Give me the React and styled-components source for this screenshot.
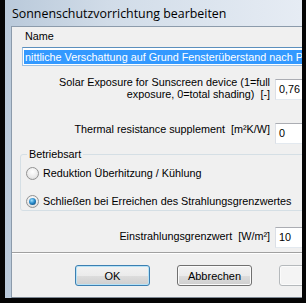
import React from 'react';
import styled, { createGlobalStyle } from 'styled-components';

// Grundlayout: schwarzer Rand, Fenster mit Aero-Rahmen
const GlobalStyle = createGlobalStyle`
  html, body {
    margin: 0;
    padding: 0;
    background: #000;
  }
  body {
    font-family: "Liberation Sans", Arial, sans-serif;
  }
`;

const Screen = styled.div`
  width: 306px;
  height: 303px;
  background: #050505;
  display: flex;
  overflow: hidden;
`;

const Window = styled.div`
  margin-left: 5px;
  width: 297px;
  height: 298px;
  display: flex;
  flex-direction: column;
  background: linear-gradient(90deg, #b9c9da 0%, #d1dce8 35%, #e6ecf4 100%);
`;

const TitleBar = styled.div`
  height: 26px;
  display: flex;
  align-items: center;
  padding-left: 7px;
  font-family: "Open Sans", "Noto Sans", sans-serif;
  font-size: 12.4px;
  color: #000;
  white-space: nowrap;
`;

const Frame = styled.div`
  flex: 1;
  display: flex;
  padding-left: 6px;
  min-height: 0;
`;

const Client = styled.div`
  flex: 1;
  min-width: 0;
  display: flex;
  flex-direction: column;
  background: #f0f0f0;
  border-top: 1px solid #8c9bab;
  border-left: 1px solid #8c9bab;
  border-bottom: 1px solid #7d8894;
  overflow: hidden;
  font-size: 10.8px;
  color: #000;
`;

// Formularbereich
const Body = styled.div`
  padding: 3px 0 0 10px;
  width: 330px;
  display: flex;
  flex-direction: column;
`;

const FieldLabel = styled.div`
  margin-left: 3px;
  line-height: 13px;
`;

const NameBox = styled.div`
  margin-top: 4px;
  height: 19px;
  box-sizing: border-box;
  border: 1px solid #9dc1e3;
  border-top-color: #5b8fbd;
  background: #fff;
  display: flex;
  align-items: center;
  padding-left: 1px;
  overflow: hidden;
  white-space: nowrap;
`;

const Selection = styled.span`
  background: #3399ff;
  color: #fff;
  line-height: 14px;
  padding-left: 1px;
`;

const FormRow = styled.div`
  margin-top: ${p => p.$gap}px;
  display: grid;
  grid-template-columns: 248px 60px;
  column-gap: 5px;
  align-items: start;
`;

const RowLabel = styled.div`
  text-align: right;
  line-height: ${p => (p.$lines ? 12 : 13)}px;
  margin-top: ${p => p.$offset || 0}px;
  white-space: nowrap;
`;

const NumberBox = styled.div`
  margin-top: ${p => p.$offset || 0}px;
  height: 21px;
  box-sizing: border-box;
  border: 1px solid #dbdfe6;
  border-top-color: #abadb3;
  border-bottom-color: #e3e9ef;
  background: #fff;
  padding: 3px 0 0 3px;
  line-height: 13px;
`;

// Gruppenrahmen "Betriebsart"
const GroupBox = styled.div`
  margin: 10px 0 0 -2px;
  border: 1px solid #d5dfe5;
  border-radius: 3px;
  padding: 0 0 2px 5px;
  display: flex;
  flex-direction: column;
`;

const GroupTitle = styled.div`
  margin-top: -7px;
  margin-left: 1px;
  padding: 0 2px;
  width: fit-content;
  background: #f0f0f0;
  line-height: 13px;
`;

const RadioRow = styled.div`
  margin-top: ${p => p.$gap}px;
  height: 13px;
  display: flex;
  align-items: center;
  gap: 4px;
  line-height: 13px;
  white-space: nowrap;
`;

const RadioDot = styled.span`
  flex: none;
  width: 13px;
  height: 13px;
  box-sizing: border-box;
  border-radius: 50%;
  border: 1px solid #929292;
  background: radial-gradient(circle at 50% 35%, #ffffff 0%, #ececec 55%, #d2d2d2 100%);
  display: flex;
  align-items: center;
  justify-content: center;

  &::after {
    content: '';
    display: ${p => (p.$checked ? 'block' : 'none')};
    width: 7px;
    height: 7px;
    border-radius: 50%;
    background: radial-gradient(circle at 40% 35%, #a6e4ff 0%, #2a8ccc 45%, #0c355c 100%);
  }
`;

// Schaltflächen unten
const ButtonPanel = styled.div`
  margin-top: 4px;
  flex: 1;
  border-top: 1px solid #a0a0a0;
  box-shadow: inset 0 1px 0 #ffffff;
  padding: 12px 0 0 63px;
  display: flex;
  gap: 27px;
  align-items: flex-start;
`;

const Button = styled.button`
  flex: none;
  width: 75px;
  height: 21px;
  padding: 0;
  border-radius: 3px;
  font-family: "Liberation Sans", Arial, sans-serif;
  font-size: 11px;
  color: #000;
  border: 1px solid ${p => (p.$default ? '#3c7fb1' : p.$disabled ? '#b5b9bc' : '#707070')};
  background: ${p =>
    p.$disabled
      ? '#f4f4f4'
      : 'linear-gradient(#f2f2f2 0%, #ebebeb 50%, #dddddd 51%, #cfcfcf 100%)'};
  box-shadow: inset 0 0 0 1px ${p => (p.$default ? '#b6e2f7' : '#fbfbfb')};
`;

const App = () => {
  return (
    <Screen>
      <GlobalStyle />
      <Window>
        <TitleBar>Sonnenschutzvorrichtung bearbeiten</TitleBar>
        <Frame>
          <Client>
            <Body>
              <FieldLabel>Name</FieldLabel>
              <NameBox>
                <Selection>nittliche Verschattung auf Grund Fensterüberstand nach PH</Selection>
              </NameBox>

              <FormRow $gap={10}>
                <RowLabel $lines>
                  Solar Exposure for Sunscreen device (1=full
                  <br />
                  exposure, 0=total shading)&nbsp; [-]
                </RowLabel>
                <NumberBox $offset={3}>0,76</NumberBox>
              </FormRow>

              <FormRow $gap={23}>
                <RowLabel $offset={0}>Thermal resistance supplement&nbsp; [m²K/W]</RowLabel>
                <NumberBox>0</NumberBox>
              </FormRow>

              <GroupBox>
                <GroupTitle>Betriebsart</GroupTitle>
                <RadioRow $gap={6}>
                  <RadioDot />
                  Reduktion Überhitzung / Kühlung
                </RadioRow>
                <RadioRow $gap={15}>
                  <RadioDot $checked />
                  Schließen bei Erreichen des Strahlungsgrenzwertes
                </RadioRow>
              </GroupBox>

              <FormRow $gap={16}>
                <RowLabel $offset={3}>Einstrahlungsgrenzwert&nbsp; [W/m²]</RowLabel>
                <NumberBox>10</NumberBox>
              </FormRow>
            </Body>

            <ButtonPanel>
              <Button $default>OK</Button>
              <Button>Abbrechen</Button>
              <Button $disabled />
            </ButtonPanel>
          </Client>
        </Frame>
      </Window>
    </Screen>
  );
};

export default App;
